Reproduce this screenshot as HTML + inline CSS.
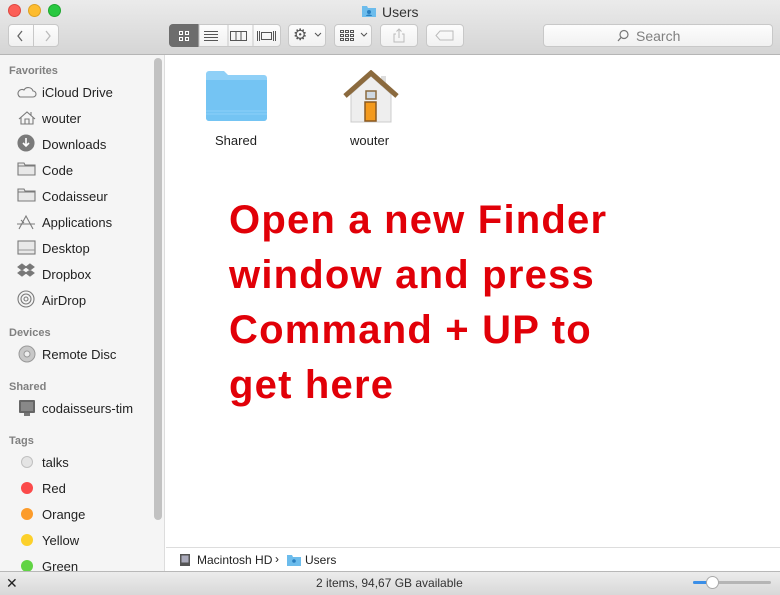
<!DOCTYPE html>
<html><head><meta charset="utf-8"><style>
*{margin:0;padding:0;box-sizing:border-box}
body{width:780px;height:595px;overflow:hidden;font-family:"Liberation Sans",sans-serif;font-size:13px;color:#222;background:#fff;position:relative}
.a{position:absolute}
#top{left:0;top:0;width:780px;height:55px;background:linear-gradient(#ebebeb,#d5d5d5);border-bottom:1px solid #b5b5b5}
.dot{width:13px;height:13px;border-radius:50%;top:4px}
.btn{background:linear-gradient(#fdfdfd,#f1f1f1);border:1px solid #c8c8c8;border-radius:4px;height:23px;top:24px}
#side{left:0;top:55px;width:165px;height:516px;background:#f5f5f5;border-right:1px solid #ddd}
.h{font-size:11px;color:#808080;font-weight:bold;left:9px}
.it{left:42px;font-size:13px;color:#222}
.tag{left:21px;width:12px;height:12px;border-radius:50%}
#red{left:229px;top:193px;color:#e10008;font-weight:bold;font-size:40px;line-height:55px;letter-spacing:1.2px}
</style></head><body>
<div id="top" class="a"></div>
<div class="a dot" style="left:8px;background:#fc5f57;border:1px solid #de4840"></div>
<div class="a dot" style="left:28px;background:#fdbc2e;border:1px solid #dea123"></div>
<div class="a dot" style="left:48px;background:#28c840;border:1px solid #1fa72f"></div>
<svg class="a" style="left:361px;top:4px" width="16" height="14"><path d="M1 2h5l1 2h8v9H1z" fill="#6cbcec"/><circle cx="8" cy="8" r="2" fill="#2a7fc0"/><path d="M5 12c0-2 6-2 6 0z" fill="#2a7fc0"/></svg>
<div class="a" style="left:382px;top:4px;font-size:14px;color:#333">Users</div>
<div class="a btn" style="left:8px;width:26px;border-radius:4px 0 0 4px"></div>
<div class="a btn" style="left:33px;width:26px;border-radius:0 4px 4px 0"></div>
<svg class="a" style="left:8px;top:24px" width="52" height="23"><path d="M14 7l-4 5 4 5" stroke="#666" fill="none" stroke-width="1.3"/><path d="M38 7l4 5-4 5" stroke="#bbb" fill="none" stroke-width="1.3"/></svg>
<div class="a btn" style="left:169px;width:112px"></div>
<div class="a" style="left:169px;top:24px;width:30px;height:23px;background:#6d6d6d;border-radius:4px 0 0 4px"></div>
<svg class="a" style="left:169px;top:24px" width="112" height="23">
<g fill="none" stroke="#fff" stroke-width="1"><rect x="10.5" y="7.5" width="3" height="3"/><rect x="16.5" y="7.5" width="3" height="3"/><rect x="10.5" y="13.5" width="3" height="3"/><rect x="16.5" y="13.5" width="3" height="3"/></g>
<g stroke="#555"><path d="M35 7.5h14M35 10.5h14M35 13.5h14M35 16.5h14"/><rect x="61.5" y="7.5" width="16" height="9" fill="none"/><path d="M67 7.5v9M72 7.5v9"/><rect x="92.5" y="8.5" width="10" height="7" fill="none"/><path d="M88.5 7v10M90.5 7v10M104.5 7v10M106.5 7v10"/></g>
<path d="M30 0v23M59 0v23M84 0v23" stroke="#c8c8c8"/></svg>
<div class="a btn" style="left:288px;width:38px"></div>
<div class="a" style="left:293px;top:25px;font-size:16px;color:#555">⚙</div>
<svg class="a" style="left:314px;top:32px" width="8" height="6"><path d="M1 1l3 3 3-3" stroke="#555" fill="none"/></svg>
<div class="a btn" style="left:334px;width:38px"></div>
<svg class="a" style="left:340px;top:30px" width="32" height="12"><g fill="none" stroke="#555"><rect x="0.5" y="0.5" width="3" height="2"/><rect x="5.5" y="0.5" width="3" height="2"/><rect x="10.5" y="0.5" width="3" height="2"/><rect x="0.5" y="4.5" width="3" height="2"/><rect x="5.5" y="4.5" width="3" height="2"/><rect x="10.5" y="4.5" width="3" height="2"/><rect x="0.5" y="8.5" width="3" height="2"/><rect x="5.5" y="8.5" width="3" height="2"/><rect x="10.5" y="8.5" width="3" height="2"/><path d="M21 3l3 3 3-3"/></g></svg>
<div class="a btn" style="left:380px;width:38px"></div>
<svg class="a" style="left:392px;top:27px" width="14" height="17"><path d="M4 7H2v8h10V7h-2M7 11V2M4.5 4.5L7 2l2.5 2.5" stroke="#bbb" fill="none"/></svg>
<div class="a btn" style="left:426px;width:38px"></div>
<svg class="a" style="left:435px;top:30px" width="20" height="12"><path d="M5 1h13v9H5L1 5.5z" stroke="#bbb" fill="none"/></svg>
<div class="a btn" style="left:543px;width:230px"></div>
<svg class="a" style="left:617px;top:29px" width="13" height="13"><circle cx="7" cy="5.5" r="4" stroke="#777" fill="none" stroke-width="1.2"/><path d="M4 8.5L1 12" stroke="#777" stroke-width="1.3"/></svg>
<div class="a" style="left:636px;top:28px;font-size:14px;color:#808080">Search</div>

<div id="side" class="a"></div>
<div class="a" style="left:154px;top:58px;width:8px;height:462px;background:#c2c2c2;border-radius:4px"></div>
<div class="a h" style="top:65px">Favorites</div>
<div class="a it" style="top:85px">iCloud Drive</div>
<div class="a it" style="top:111px">wouter</div>
<div class="a it" style="top:137px">Downloads</div>
<div class="a it" style="top:163px">Code</div>
<div class="a it" style="top:189px">Codaisseur</div>
<div class="a it" style="top:215px">Applications</div>
<div class="a it" style="top:241px">Desktop</div>
<div class="a it" style="top:267px">Dropbox</div>
<div class="a it" style="top:293px">AirDrop</div>
<svg class="a" style="left:16px;top:83px" width="22" height="230" fill="none" stroke="#7a7a7a" stroke-width="1.1">
<path d="M4 14h13a3 3 0 0 0 0-6 5 5 0 0 0-9-1 3.5 3.5 0 0 0-4 7z"/>
<path d="M3 36l8-7 8 7M5 34v7h12v-7M9 41v-5h4v5M15 29v3"/>
<circle cx="10" cy="60" r="8" fill="#7a7a7a"/><path d="M10 55v8M7 60l3 3 3-3" stroke="#fff" stroke-width="1.6"/>
<path d="M2 80h6l1 2h10v10H2z" fill="#e8e8e8"/><path d="M2 83h17"/>
<path d="M2 106h6l1 2h10v10H2z" fill="#e8e8e8"/><path d="M2 109h17"/>
<path d="M3 146l7-13 7 13M1 141h18M5 137l3 3"/>
<rect x="2" y="158" width="17" height="13" fill="#e8e8e8"/><path d="M2 167h17" stroke="#999"/>
<path d="M6 181l-4 3 4 3 4-3zM14 181l-4 3 4 3 4-3zM6 187l-4 3 4 3 4-3zM14 187l-4 3 4 3 4-3z" fill="#777"/>
<circle cx="10" cy="216" r="8"/><circle cx="10" cy="216" r="5"/><circle cx="10" cy="216" r="2"/>
</svg>
<div class="a h" style="top:327px">Devices</div>
<svg class="a" style="left:18px;top:345px" width="18" height="18"><circle cx="9" cy="9" r="8" fill="#c8c8c8" stroke="#999"/><circle cx="9" cy="9" r="3" fill="#eee" stroke="#999"/></svg>
<div class="a it" style="top:347px">Remote Disc</div>
<div class="a h" style="top:381px">Shared</div>
<svg class="a" style="left:18px;top:399px" width="18" height="18"><rect x="1" y="1" width="16" height="13" rx="1" fill="#666"/><rect x="3" y="3" width="12" height="9" fill="#888"/><rect x="6" y="14" width="6" height="3" fill="#777"/></svg>
<div class="a it" style="top:401px">codaisseurs-tim</div>
<div class="a h" style="top:435px">Tags</div>
<div class="a tag" style="top:456px;background:#e4e4e4;border:1px solid #c0c0c0"></div><div class="a it" style="top:455px">talks</div>
<div class="a tag" style="top:482px;background:#fb4a4a"></div><div class="a it" style="top:481px">Red</div>
<div class="a tag" style="top:508px;background:#fc9b2a"></div><div class="a it" style="top:507px">Orange</div>
<div class="a tag" style="top:534px;background:#fcd02a"></div><div class="a it" style="top:533px">Yellow</div>
<div class="a tag" style="top:560px;background:#61d444"></div><div class="a it" style="top:559px">Green</div>

<svg class="a" style="left:204px;top:70px" width="64" height="52"><path d="M2 4a3 3 0 0 1 3-3h15l4 4h36a3 3 0 0 1 3 3v40a3 3 0 0 1-3 3H5a3 3 0 0 1-3-3z" fill="#8fd0f7"/><path d="M2 10h61v38a3 3 0 0 1-3 3H5a3 3 0 0 1-3-3z" fill="#74c4f3"/><path d="M2 41h61M2 44h61" stroke="#8cd0f8"/></svg>
<div class="a" style="left:215px;top:133px">Shared</div>
<svg class="a" style="left:343px;top:70px" width="56" height="54"><rect x="38" y="6" width="5" height="12" fill="#ddd"/><path d="M8 24L28 6l20 18v28H8z" fill="#eee" stroke="#ccc"/><path d="M2 26L28 3l26 23" stroke="#8b6a3e" stroke-width="5" fill="none"/><rect x="23" y="21" width="10" height="8" fill="#cfd9e3" stroke="#8b6a3e" stroke-width="1.5"/><rect x="22" y="32" width="11" height="19" fill="#f39a1e" stroke="#8b5a20" stroke-width="1.5"/></svg>
<div class="a" style="left:350px;top:133px">wouter</div>

<div id="red" class="a">Open a new Finder<br>window and press<br>Command + UP to<br>get here</div>

<div class="a" style="left:166px;top:547px;width:614px;height:1px;background:#ddd"></div>
<svg class="a" style="left:179px;top:553px" width="12" height="14"><rect x="1" y="1" width="10" height="12" fill="#555"/><rect x="2.5" y="2.5" width="7" height="7" fill="#aab"/></svg>
<div class="a" style="left:197px;top:553px;font-size:12px">Macintosh HD</div>
<div class="a" style="left:275px;top:552px;font-size:12px">›</div>
<svg class="a" style="left:287px;top:554px" width="14" height="12"><path d="M0 1h5l1 2h8v9H0z" fill="#6cbcec"/><circle cx="7" cy="7" r="1.8" fill="#2a7fc0"/></svg>
<div class="a" style="left:305px;top:553px;font-size:12px">Users</div>

<div class="a" style="left:0;top:571px;width:780px;height:24px;background:linear-gradient(#ececec,#d8d8d8);border-top:1px solid #b8b8b8"></div>
<div class="a" style="left:6px;top:575px;font-size:14px;color:#222">✕</div>
<div class="a" style="left:316px;top:576px;font-size:12px;color:#333">2 items, 94,67 GB available</div>
<div class="a" style="left:693px;top:581px;width:78px;height:3px;background:#b5b5b5;border-radius:2px"></div>
<div class="a" style="left:693px;top:581px;width:18px;height:3px;background:#3b8fe8;border-radius:2px"></div>
<div class="a" style="left:706px;top:576px;width:13px;height:13px;border-radius:50%;background:#fff;border:1px solid #aaa"></div>
</body></html>
